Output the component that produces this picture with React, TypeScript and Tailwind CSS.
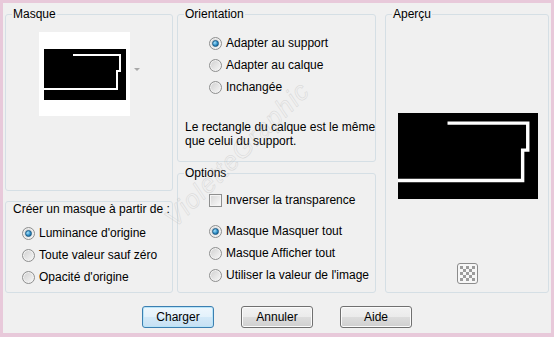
import React from 'react';

const font = "font-['Liberation_Sans',Arial,sans-serif]";

function Radio({ checked }: { checked?: boolean }) {
  return (
    <span className="flex h-[13px] w-[13px] shrink-0 items-center justify-center rounded-full border border-[#8e8f8f] bg-[linear-gradient(135deg,#cfcfcf,#f8f8f8)] shadow-[inset_0_0_0_1px_#f2f2f2]">
      {checked && (
        <span className="h-[7px] w-[7px] rounded-full border border-[#1b5a85] bg-[radial-gradient(circle_at_35%_35%,#a8e2fb,#2e8fc8_55%,#0d4a74)]" />
      )}
    </span>
  );
}

function Check() {
  return (
    <span className="h-[13px] w-[13px] shrink-0 border border-[#8e8f8f] bg-[linear-gradient(135deg,#d6d6d6,#fbfbfb)] shadow-[inset_0_0_0_1px_#f4f4f4]" />
  );
}

function Option({ label, checked, box }: { label: string; checked?: boolean; box?: boolean }) {
  return (
    <div className="flex h-[22px] items-center gap-[4px]">
      {box ? <Check /> : <Radio checked={checked} />}
      <span className="whitespace-nowrap leading-[14px]">{label}</span>
    </div>
  );
}

function Group({ title, className, children }: { title: string; className: string; children: React.ReactNode }) {
  return (
    <fieldset className={`rounded-[3px] border border-[#d5dfe5] ${className}`}>
      <legend className="ml-[6px] px-[1px] leading-[14px]">{title}</legend>
      {children}
    </fieldset>
  );
}

// the frame drawn over the black mask image
function MaskShape() {
  return (
    <svg viewBox="0 0 82 51" preserveAspectRatio="none" className="h-full w-full">
      <rect width="82" height="51" fill="#000" />
      <path d="M29 6 H76 V22 H73 V40 H0" fill="none" stroke="#fff" strokeWidth="2" />
    </svg>
  );
}

function CheckerIcon() {
  const cells = [];
  for (let r = 0; r < 5; r++) {
    for (let c = 0; c < 5; c++) {
      if ((r + c) % 2 === 0) cells.push(<rect key={`${r}-${c}`} x={3 + c * 3} y={3 + r * 3} width="3" height="3" fill="#9c9c9c" />);
    }
  }
  return (
    <svg width="21" height="21" viewBox="0 0 21 21">
      <rect x="0.5" y="0.5" width="20" height="20" rx="2.5" fill="#f7f7f7" stroke="#8c8c8c" />
      {cells}
    </svg>
  );
}

function Button({ label, primary }: { label: string; primary?: boolean }) {
  return (
    <button
      className={
        primary
          ? 'h-[22px] w-[72px] rounded-[3px] border border-[#3c7fb1] bg-[linear-gradient(#eef7fd,#e3f1fb_50%,#d3e9f8_50%,#c6e0f3)] shadow-[inset_0_0_0_1px_#b8e4f8] leading-[14px]'
          : 'h-[22px] w-[72px] rounded-[3px] border border-[#707070] bg-[linear-gradient(#f2f2f2,#ebebeb_50%,#dddddd_50%,#cfcfcf)] shadow-[inset_0_0_0_1px_#fbfbfb] leading-[14px]'
      }
    >
      {label}
    </button>
  );
}

export default function App() {
  return (
    <div className={`h-[337px] w-[554px] bg-[#e8c9da] px-[3px] pb-[4px] pt-[3px] text-[12px] text-black ${font}`}>
      <div className="relative flex h-full flex-col bg-[#f0f0f0] px-[2px] pt-[4px]">
        <div className="flex">
          {/* left column */}
          <div className="flex w-[168px] flex-col">
            <Group title="Masque" className="h-[184px]">
              <div className="ml-[33px] mt-[11px] flex items-center">
                <div className="flex h-[84px] w-[91px] items-center bg-white pl-[5px]">
                  <div className="h-[51px] w-[82px]">
                    <MaskShape />
                  </div>
                </div>
                <span className="ml-[4px] mt-[-10px] h-0 w-0 border-x-[3px] border-t-[3px] border-x-transparent border-t-[#a8a8a8]" />
              </div>
            </Group>
            <div className="mt-[10px] h-[92px] rounded-[3px] border border-[#d5dfe5] pl-[7px]">
              <div className="leading-[14px]">Créer un masque à partir de :</div>
              <div className="mt-[6px] pl-[9px]">
                <Option label="Luminance d'origine" checked />
                <Option label="Toute valeur sauf zéro" />
                <Option label="Opacité d'origine" />
              </div>
            </div>
          </div>

          {/* middle column */}
          <div className="ml-[4px] flex w-[199px] flex-col">
            <Group title="Orientation" className="h-[155px]">
              <div className="mt-[11px] pl-[31px]">
                <Option label="Adapter au support" checked />
                <Option label="Adapter au calque" />
                <Option label="Inchangée" />
              </div>
              <p className="mt-[22px] whitespace-nowrap pl-[7px] leading-[14px]">
                Le rectangle du calque est le même
                <br />
                que celui du support.
              </p>
            </Group>
            <Group title="Options" className="mt-[4px] h-[127px]">
              <div className="mt-[9px] pl-[31px]">
                <Option label="Inverser la transparence" box />
                <div className="mt-[9px]">
                  <Option label="Masque Masquer tout" checked />
                  <Option label="Masque Afficher tout" />
                  <Option label="Utiliser la valeur de l'image" />
                </div>
              </div>
            </Group>
          </div>

          {/* right column */}
          <Group title="Aperçu" className="ml-[9px] flex h-[286px] w-[164px] flex-col">
            <div className="ml-[12px] mt-[92px] h-[86px] w-[140px]">
              <MaskShape />
            </div>
            <div className="mt-[64px] flex justify-center">
              <CheckerIcon />
            </div>
          </Group>
        </div>

        <div className="mt-[13px] flex justify-center gap-[27px]">
          <Button label="Charger" primary />
          <Button label="Annuler" />
          <Button label="Aide" />
        </div>

        {/* watermark */}
        <span className="pointer-events-none absolute left-[138px] top-[132px] rotate-[-45deg] text-[26px] italic tracking-[1px] text-transparent opacity-40 [-webkit-text-stroke:0.5px_#b0b0b0]">
          VioletteGraphic
        </span>
      </div>
    </div>
  );
}
